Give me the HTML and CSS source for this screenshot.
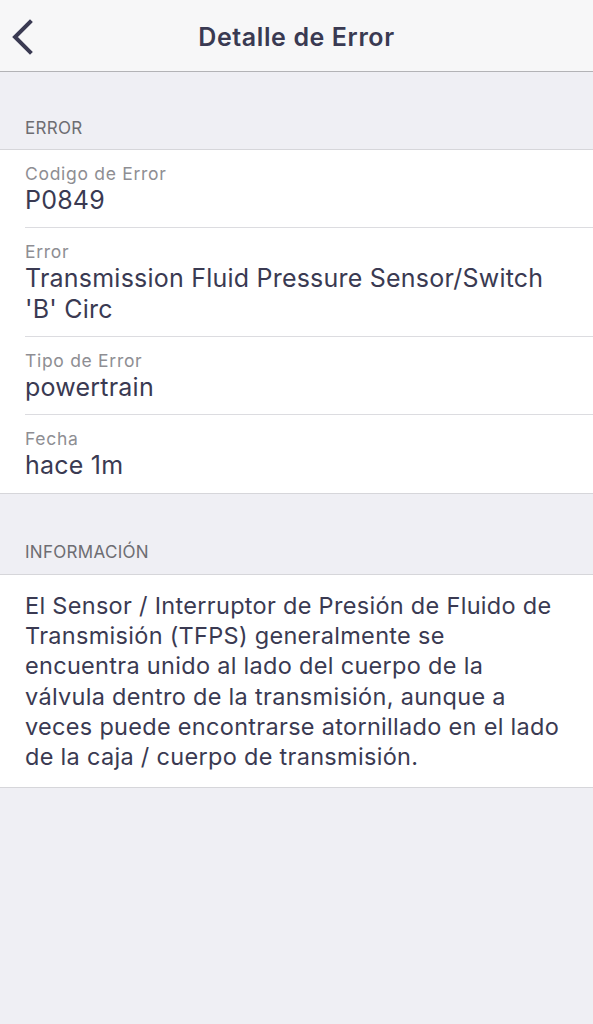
FILE: index.html
```html
<!DOCTYPE html>
<html lang="es">
<head>
<meta charset="utf-8">
<title>Detalle de Error</title>
<link rel="stylesheet" href="styles.css">
</head>
<body>
<header class="navbar">
  <button class="back" aria-label="Atrás">
    <svg width="24" height="40" viewBox="0 0 24 40"><polyline points="19,3 4,18 19,33" fill="none" stroke="currentColor" stroke-width="4" stroke-linecap="square"/></svg>
  </button>
  <h1 class="title">Detalle de Error</h1>
</header>
<main>
  <div class="section-header">ERROR</div>
  <div class="group">
    <div class="row">
      <div class="label">Codigo de Error</div>
      <div class="value">P0849</div>
    </div>
    <div class="row">
      <div class="label">Error</div>
      <div class="value">Transmission Fluid Pressure Sensor/Switch 'B' Circ</div>
    </div>
    <div class="row">
      <div class="label">Tipo de Error</div>
      <div class="value">powertrain</div>
    </div>
    <div class="row">
      <div class="label">Fecha</div>
      <div class="value">hace 1m</div>
    </div>
  </div>
  <div class="section-header section-header--next">INFORMACIÓN</div>
  <div class="group">
    <p class="info">El Sensor / Interruptor de Presión de Fluido de Transmisión (TFPS) generalmente se encuentra unido al lado del cuerpo de la válvula dentro de la transmisión, aunque a veces puede encontrarse atornillado en el lado de la caja / cuerpo de transmisión.</p>
  </div>
</main>
</body>
</html>
```
FILE: styles.css
```css
* { box-sizing: border-box; }
html, body { margin: 0; padding: 0; }
body {
  background: #efeff4;
  font-family: Inter, "Noto Sans", sans-serif;
  color: #3a3a52;
  width: 593px;
  min-height: 1024px;
}
.navbar {
  height: 72px;
  background: #f7f7f8;
  border-bottom: 1px solid #b3b3b6;
  display: flex;
  align-items: center;
  justify-content: center;
  position: relative;
}
.back {
  position: absolute;
  left: 11px;
  top: 19px;
  background: none;
  border: 0;
  padding: 0;
  color: #3a3a52;
  display: flex;
}
.title {
  margin: 0;
  font-size: 25px;
  font-weight: 600;
  letter-spacing: 0.6px;
  color: #3a3a52;
  padding-top: 2px;
}
.section-header {
  height: 77px;
  padding: 0 25px 10px;
  display: flex;
  align-items: flex-end;
  font-size: 17px;
  letter-spacing: 0.3px;
  color: #6d6d72;
  line-height: 22px;
}
.section-header--next {
  height: 80px;
  padding-bottom: 11px;
}
.group {
  background: #fff;
  border-top: 1px solid #d6d6da;
  border-bottom: 1px solid #d6d6da;
}
.row {
  margin-left: 25px;
  padding: 12px 25px 11px 0;
  border-bottom: 1px solid #dcdce0;
}
.row:last-child { border-bottom: 0; padding-bottom: 12px; }
.label {
  font-size: 17.5px;
  letter-spacing: 0.7px;
  line-height: 23px;
  color: #8e8e93;
}
.value {
  font-size: 25px;
  letter-spacing: 0.22px;
  line-height: 31px;
  color: #3a3a52;
}
.info {
  margin: 0;
  padding: 16px 31px 15px 25px;
  font-size: 23.5px;
  letter-spacing: 0.3px;
  line-height: 30.2px;
  color: #3a3a52;
}
```
